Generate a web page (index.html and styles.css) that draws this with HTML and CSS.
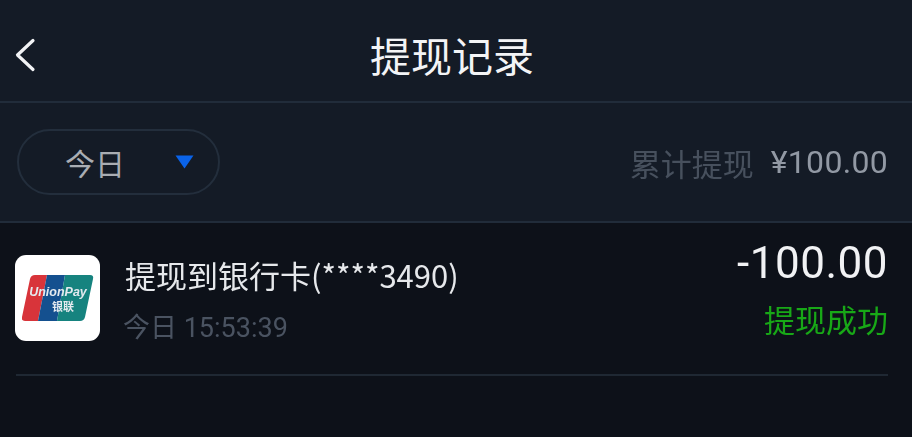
FILE: index.html
```html
<!DOCTYPE html>
<html lang="zh">
<head>
<meta charset="utf-8">
<title>提现记录</title>
<link rel="stylesheet" href="styles.css">
</head>
<body>
<header class="topbar">
  <svg class="back" width="24" height="36" viewBox="0 0 24 36" aria-hidden="true"><path d="M21 3.500 L5.500 18 L21 32.500" fill="none" stroke="#f2f3f5" stroke-width="3.200" stroke-linecap="round" stroke-linejoin="round"/></svg>
  <h1 class="title">提现记录</h1>
</header>
<section class="filter">
  <div class="pill">
    <span class="pill-label">今日</span>
    <svg class="caret" width="19" height="14" viewBox="0 0 19 14" aria-hidden="true"><path d="M0.500 0.500 H18.500 L9.500 13.500 Z" fill="#0a63e8"/></svg>
  </div>
  <div class="total"><span class="total-label">累计提现</span><span class="total-value">¥100.00</span></div>
</section>
<main class="list">
  <article class="row">
    <div class="logo">
      <svg width="72" height="46" viewBox="0 0 72 46" aria-hidden="true">
        <path d="M13 0 H25 L16 46 H3 Q-1 46 0 42 L8 4 Q9 0 13 0 Z" fill="#d8343a"/>
        <path d="M25 0 H43 L35 46 H16 Z" fill="#14508f"/>
        <path d="M43 0 H68 Q72 0 71 4 L63 42 Q62 46 58 46 H35 Z" fill="#16837f"/>
        <text class="logo-en" x="36" y="21" text-anchor="middle">UnionPay</text>
        <text class="logo-cn" x="41" y="36" text-anchor="middle">银联</text>
      </svg>
    </div>
    <div class="info">
      <div class="name">提现到银行卡(****3490)</div>
      <div class="time">今日 15:53:39</div>
    </div>
    <div class="result">
      <div class="amount">-100.00</div>
      <div class="status">提现成功</div>
    </div>
  </article>
</main>
</body>
</html>
```

FILE: styles.css
```css
* { box-sizing: border-box; }
html, body { margin: 0; padding: 0; }
body {
  width: 912px;
  height: 437px;
  overflow: hidden;
  background: #0d1119;
  font-family: "Roboto", "Noto Sans CJK SC", sans-serif;
  filter: blur(0.4px);
}
.topbar {
  height: 103px;
  display: flex;
  align-items: center;
  justify-content: center;
  position: relative;
  background: #141b26;
  border-bottom: 2px solid #212c3a;
  padding: 8px 8px 0 0;
}
.back { position: absolute; left: 12px; top: 37px; }
.title {
  margin: 0;
  font-family: "Noto Sans CJK SC", sans-serif;
  font-size: 41px;
  font-weight: 400;
  line-height: 1.2;
  color: #f3f4f6;
}
.filter {
  height: 120px;
  display: flex;
  align-items: center;
  justify-content: space-between;
  padding: 0 24px 0 17px;
  background: #141b26;
  border-bottom: 2px solid #212c3a;
}
.pill {
  width: 203px;
  height: 66px;
  display: flex;
  align-items: center;
  padding-left: 46px;
  border: 2px solid #232e3c;
  border-radius: 33px;
}
.pill-label {
  font-family: "Noto Sans CJK SC", sans-serif;
  font-size: 30px;
  color: #a9adb3;
}
.caret { margin-left: 50px; }
.total { display: flex; align-items: center; gap: 17px; }
.total-label {
  font-family: "Noto Sans CJK SC", sans-serif;
  font-size: 31px;
  color: #47505d;
}
.total-value { font-size: 32px; letter-spacing: 0.300px; color: #9299a4; }
.list { padding: 0 24px 0 16px; }
.row {
  height: 153px;
  display: flex;
  border-bottom: 2px solid #1f2833;
}
.logo {
  width: 85px;
  height: 86px;
  margin: 32px 0 0 -1px;
  display: flex;
  align-items: center;
  justify-content: center;
  background: #fff;
  border-radius: 11px;
}
.logo svg { display: block; }
.logo-en {
  font-family: "Liberation Sans", sans-serif;
  font-size: 12.500px;
  font-style: italic;
  font-weight: 700;
  fill: #e4eaef;
}
.logo-cn {
  font-family: "Noto Sans CJK SC", sans-serif;
  font-size: 11px;
  font-weight: 700;
  fill: #e4eaef;
}
.info { margin: 30px 0 0 25px; flex: 1; }
.name {
  font-family: "Noto Sans CJK SC", sans-serif;
  font-size: 31px;
  line-height: 44px;
  color: #e6e8eb;
  white-space: nowrap;
}
.time {
  margin-top: 12px;
  margin-left: -2px;
  font-size: 27px;
  line-height: 38px;
  color: #4a5361;
  white-space: nowrap;
}
.result { text-align: right; margin-top: 14px; }
.amount {
  font-size: 44px;
  line-height: 52px;
  letter-spacing: 0.500px;
  color: #f1f2f4;
}
.status {
  margin-top: 8px;
  font-family: "Noto Sans CJK SC", sans-serif;
  font-size: 31px;
  line-height: 44px;
  color: #18a817;
}
```
